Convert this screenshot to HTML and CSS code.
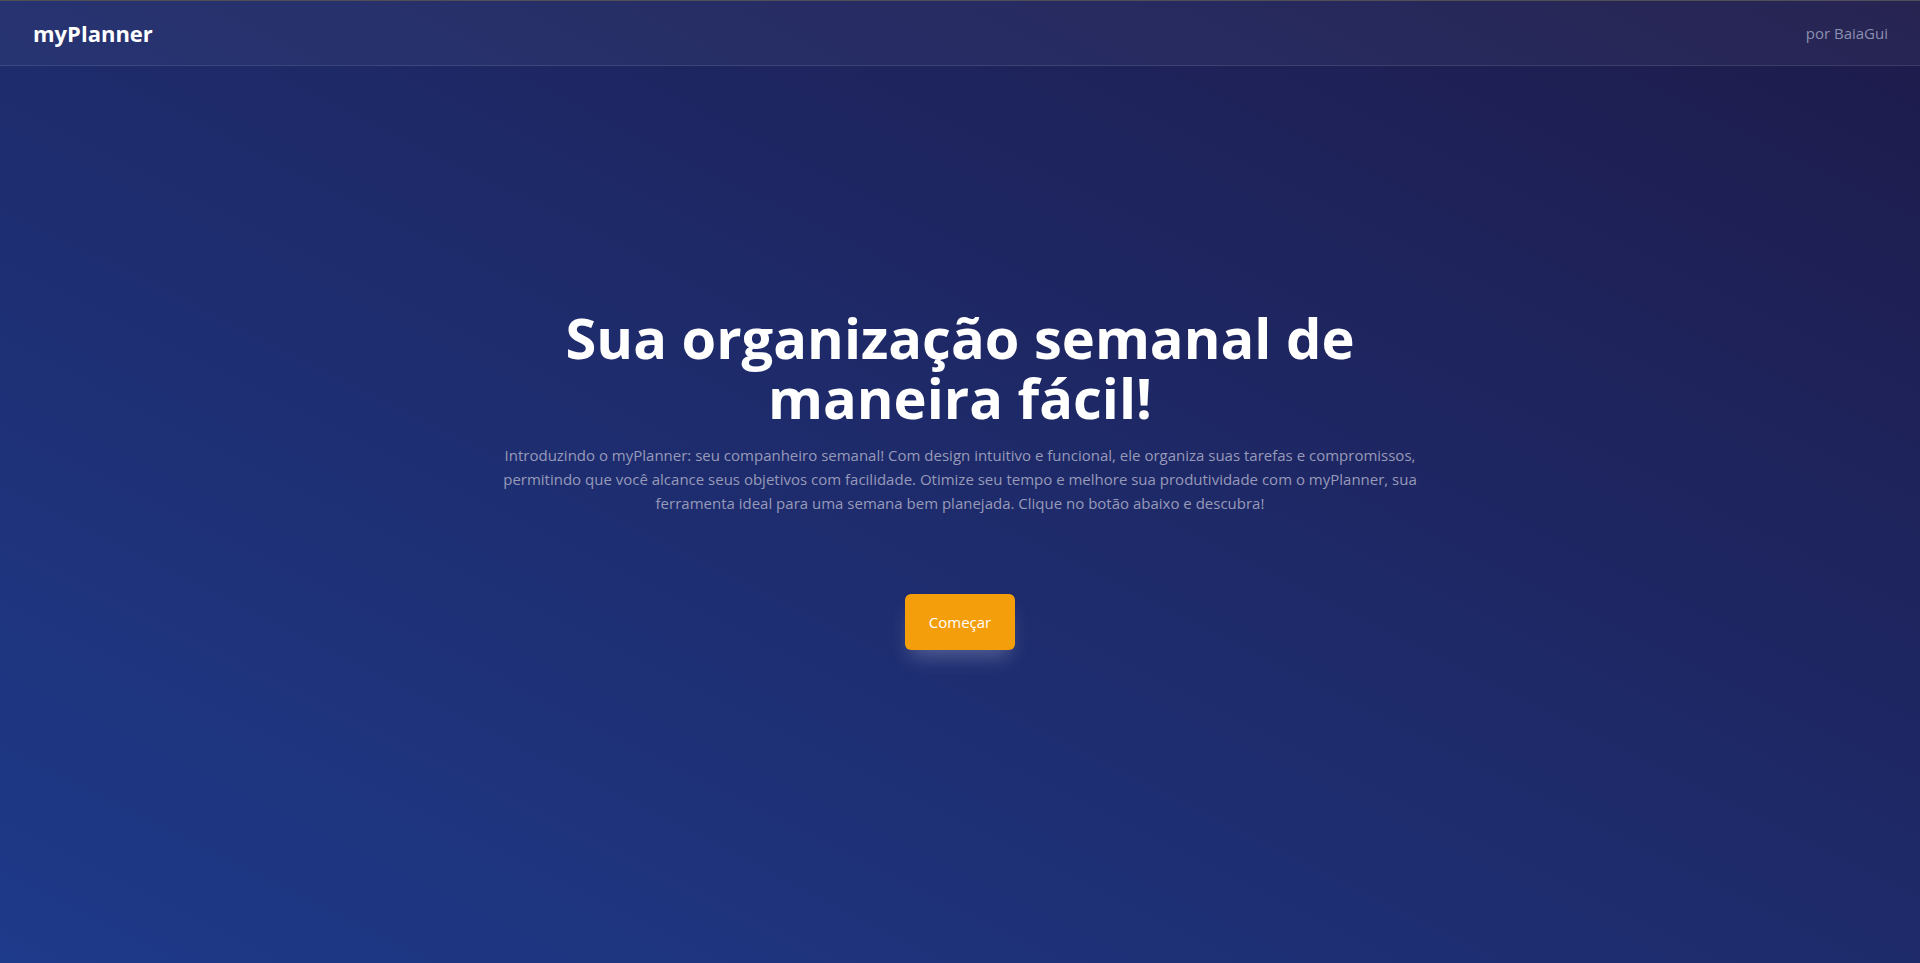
FILE: index.html
```html
<!DOCTYPE html>
<html lang="pt-BR">
<head>
<meta charset="utf-8">
<title>myPlanner</title>
<link rel="stylesheet" href="styles.css">
</head>
<body>
<div class="page">
  <header class="topbar">
    <span class="brand">myPlanner</span>
    <span class="author">por BaiaGui</span>
  </header>
  <main class="hero">
    <div class="hero-inner">
      <h1 class="hero-title">Sua organização semanal de maneira fácil!</h1>
      <p class="hero-text">Introduzindo o myPlanner: seu companheiro semanal! Com design intuitivo e funcional, ele organiza suas tarefas e compromissos, permitindo que você alcance seus objetivos com facilidade. Otimize seu tempo e melhore sua produtividade com o myPlanner, sua ferramenta ideal para uma semana bem planejada. Clique no botão abaixo e descubra!</p>
      <button class="start-btn" type="button">Começar</button>
    </div>
  </main>
</div>
</body>
</html>
```

FILE: styles.css
```css
* { box-sizing: border-box; }
html, body { margin: 0; padding: 0; height: 100%; }
body {
  font-family: "Open Sans", "Noto Sans", "Liberation Sans", sans-serif;
  background: #1e2a6a;
}
.page {
  min-height: 100vh;
  display: flex;
  flex-direction: column;
  border-top: 1px solid #4f4f55;
  background: linear-gradient(to top right, #1e3a8a, #1e1b4b);
}
.topbar {
  height: 65px;
  display: flex;
  align-items: center;
  justify-content: space-between;
  padding: 0 32px 0 33px;
  background: rgba(255, 255, 255, 0.045);
  border-bottom: 1px solid rgba(255, 255, 255, 0.1);
}
.brand {
  color: #ffffff;
  font-weight: 700;
  font-size: 22px;
}
.author {
  color: #8c8fb0;
  font-size: 15px;
}
.hero {
  flex: 1;
  display: flex;
  align-items: center;
  justify-content: center;
  padding-bottom: 72px;
}
.hero-inner {
  width: 960px;
  display: flex;
  flex-direction: column;
  align-items: center;
  text-align: center;
}
.hero-title {
  margin: 0;
  color: #ffffff;
  font-weight: 700;
  font-size: 56px;
  line-height: 60px;
  width: 820px;
}
.hero-text {
  margin: 16px 0 0;
  color: #979ab9;
  font-size: 15px;
  line-height: 24px;
}
.start-btn {
  margin-top: 79px;
  width: 110px;
  height: 56px;
  border: 0;
  border-radius: 6px;
  background: #f59e0b;
  color: #ffffff;
  font-family: inherit;
  font-size: 15px;
  box-shadow: 0 12px 20px -6px rgba(190, 195, 220, 0.35);
  cursor: pointer;
}
```
